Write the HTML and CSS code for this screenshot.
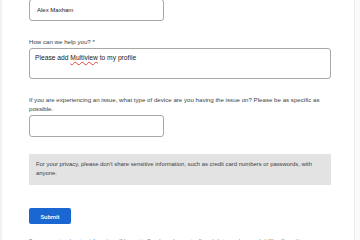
FILE: index.html
```html
<!DOCTYPE html>
<html lang="en">
  <head>
    <meta charset="UTF-8" />
    <meta name="viewport" content="width=device-width, initial-scale=1.0" />
    <title>Contact support</title>
    <link rel="stylesheet" href="styles.css">
  </head>
  <body>
    <div class="page">
      <form class="form">
        <div class="field first">
          <div class="input short">Alex Maxham</div>
        </div>

        <div class="field">
          <label class="label">How can we help you? *</label>
          <div class="input textarea">Please add <span class="typo">Multiview</span> to my profile</div>
        </div>

        <div class="field">
          <label class="label">If you are experiencing an issue, what type of device are you having the issue on? Please be as specific as possible.</label>
          <div class="input short"></div>
        </div>

        <div class="notice">
          For your privacy, please don't share sensitive information, such as credit card numbers or passwords, with anyone.
        </div>

        <button type="button" class="submit">Submit</button>

        <p class="legal">
          Some <a href="#">account and system information</a> will be sent to Google, and support calls and chats may be recorded. We will use this
        </p>
      </form>
      <div class="rail"></div>
    </div>
  </body>
</html>
```

FILE: styles.css
```css
body {
  margin: 0;
  font-family: "Liberation Sans", Arial, sans-serif;
  color: #202124;
  background-color: #fff;
  overflow: hidden;
}

.page {
  display: flex;
  height: 240px;
  border-left: 2px solid #f1f1f1;
}

.form {
  width: 302px;
  padding-left: 27px;
  margin-top: -1px;
}

.rail {
  margin-left: 23px;
  flex-grow: 1;
  border-left: 1px solid #ececec;
  background-color: #fafafa;
}

.field {
  margin-top: 16px;
}
.field.first {
  margin-top: 0;
}

.label {
  display: block;
  font-size: 6.15px;
  line-height: 9px;
  color: #3c4043;
  margin-bottom: 2px;
}

.input {
  box-sizing: border-box;
  border: 1px solid #a8a8a8;
  border-radius: 3px;
  background-color: #fff;
  color: #202124;
}
.input.short {
  width: 135px;
  height: 22px;
  padding: 6px 7px;
  line-height: 9px;
  font-size: 6px;
}
.input.textarea {
  width: 302px;
  height: 31px;
  padding: 4px 5px;
  line-height: 9px;
  font-size: 6.7px;
}

.typo {
  text-decoration: underline wavy #e0443e;
  text-decoration-thickness: 1px;
  text-underline-offset: 1px;
}

.notice {
  margin-top: 17px;
  background-color: #e3e3e3;
  padding: 6px 14px 6px 7px;
  font-size: 5.9px;
  line-height: 9px;
  color: #3c4043;
  height: 31px;
  box-sizing: border-box;
}

.submit {
  display: block;
  margin-top: 23px;
  width: 42px;
  height: 16px;
  padding: 0;
  border: none;
  border-radius: 2px;
  background-color: #1a67d2;
  color: white;
  font-family: "Roboto", sans-serif;
  font-weight: 500;
  font-size: 6px;
  cursor: pointer;
}

.legal {
  margin: 13px 0 0;
  font-size: 5px;
  line-height: 8px;
  color: #5f6368;
}
.legal a {
  color: #1a67d2;
}
```
